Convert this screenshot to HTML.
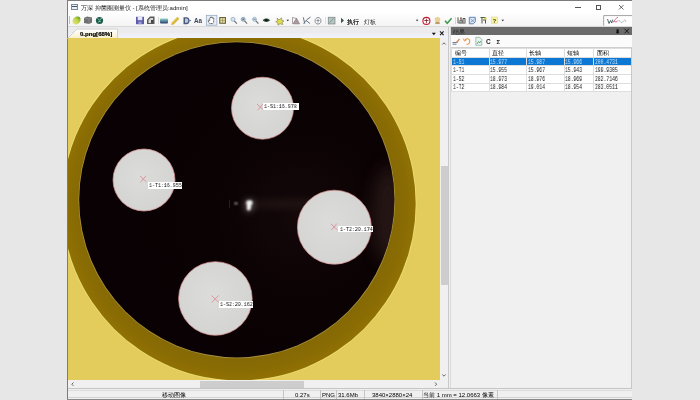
<!DOCTYPE html>
<html><head><meta charset="utf-8">
<style>
*{margin:0;padding:0;box-sizing:border-box}
html,body{width:700px;height:400px;overflow:hidden;background:#e7e7e7;font-family:"Liberation Sans",sans-serif;font-size:7px;color:#222;position:relative}
.a{position:absolute;will-change:transform}
.lbl{position:absolute;background:#fff;height:6.5px;overflow:hidden}
.lbl span{position:absolute;will-change:transform;left:1.3px;top:0.9px;color:#111;font-family:"Liberation Mono",monospace;font-size:6.2px;line-height:6.5px;white-space:nowrap;transform:scaleX(0.8);transform-origin:0 0}
.th{position:absolute;will-change:transform;font-size:5.5px;line-height:6px;color:#000;white-space:nowrap}
.td{position:absolute;will-change:transform;font-family:"Liberation Mono",monospace;font-size:6.3px;line-height:6px;color:#111;white-space:nowrap;transform:scaleX(0.75);transform-origin:0 0}
.td.sel{color:#c8e2f8}
.st{position:absolute;top:391px;line-height:8px;font-size:6px;color:#000;will-change:transform;white-space:nowrap}
.sep{position:absolute;top:389.5px;width:1px;height:9px;background:#c4c4c4}
</style></head><body>
<div class="a" style="left:67px;top:0px;width:565px;height:400px;background:#f0f0f0;border:1px solid #7c7c7c;border-right:none"></div>
<div class="a" style="left:68px;top:1px;width:564px;height:12px;background:#fff;"></div>
<div class="a" style="left:71px;top:4px;width:7px;height:6px;background:#e8eef5;border:1px solid #7a8aa0"></div>
<div class="a" style="left:72px;top:6px;width:5px;height:1px;background:#44546a;"></div>
<div class="a" style="left:81px;top:2.5px;font-size:6.1px;line-height:10px;color:#1a1a1a;white-space:nowrap">万深 抑菌圈测量仪 - [系统管理员:admin]</div>
<div class="a" style="left:575px;top:7px;width:5.5px;height:0.8px;background:#555;"></div>
<div class="a" style="left:596.3px;top:5px;width:5.4px;height:4.8px;background:transparent;border:0.8px solid #555"></div>
<svg class="a" style="left:618px;top:4px" width="7" height="7"><path d="M1 1L5.5 5.5M5.5 1L1 5.5" stroke="#444" stroke-width="0.8"/></svg>
<div class="a" style="left:68px;top:13px;width:564px;height:14px;background:linear-gradient(#fefefe,#f3f3f3);"></div>
<div class="a" style="left:68px;top:26px;width:564px;height:1px;background:#d9d9d9;"></div>
<svg class="a" style="left:0;top:0" width="700" height="30">
<defs>
<linearGradient id="g1" x1="0" y1="1" x2="1" y2="0"><stop offset="0" stop-color="#f0e890"/><stop offset="0.6" stop-color="#b8d040"/><stop offset="1" stop-color="#3c8a20"/></linearGradient>
<linearGradient id="g6" x1="0" y1="0" x2="0" y2="1"><stop offset="0" stop-color="#8fd0c8"/><stop offset="1" stop-color="#2a3f70"/></linearGradient>
</defs>
<rect x="69" y="16" width="0.8" height="8" fill="#b0b0b0"/>
<path d="M72.5 21.5c0-3 2.5-5 5-5s3 1.5 3 3.5-2 4.5-4.5 4.5-3.5-1-3.5-3z" fill="url(#g1)"/>
<path d="M84 18l3-1.5 5 1v5l-3 1.5-5-1z" fill="#707070"/><path d="M84 18l5 1v5M89 19l3-1.5" stroke="#9a9a9a" stroke-width="0.6" fill="none"/>
<circle cx="99.5" cy="20.5" r="3.6" fill="#1d5c4c"/><path d="M97.5 18.5l2 1.5 2.5-2M98 22l3-1" stroke="#9fd8c8" stroke-width="0.8" fill="none"/>
<rect x="136" y="16.8" width="8" height="7.4" fill="#5c5ca8"/><rect x="137.7" y="16.8" width="4.6" height="3.4" fill="#e8e8f8"/><rect x="138.4" y="21.6" width="3.2" height="2.6" fill="#9a9ad8"/>
<path d="M147 24v-4.5l3-3h4.5v7.5z" fill="#5a5a5a"/><path d="M148.5 23v-3l2-2h2.5v5z" fill="#d8d8d8"/><rect x="151" y="20" width="2" height="3" fill="#444"/>
<rect x="158" y="17" width="0.8" height="7" fill="#d0d0d0"/>
<rect x="160" y="18.6" width="8" height="4.8" rx="0.8" fill="url(#g6)"/>
<path d="M171.8 22.5l5.5-5.8 2 2-5.5 5.8-2.6 0.6z" fill="#d8b838"/><path d="M172.3 22.2l5.2-5.3" stroke="#f6e8a0" stroke-width="0.7"/>
<path d="M183.5 17.2h3c2 0 3 1.5 3 3.5s-1 3.5-3 3.5h-3z" fill="#4a5a78"/><path d="M185 18.6h1.5c1.1 0 1.7 0.9 1.7 2.1s-0.6 2.1-1.7 2.1H185z" fill="#b8c8e0"/><path d="M189.5 20.5l1.5 0" stroke="#4a5a78" stroke-width="0.8"/>
<text x="194" y="23.4" font-family="Liberation Sans" font-size="6.3" fill="#3c4660" font-weight="bold">Aa</text>
<rect x="206.3" y="15.3" width="10.6" height="9.9" fill="#e6eef8" stroke="#8ca4bc" stroke-width="0.7"/>
<path d="M209.8 23.6c-0.8-1-1.6-2-1.6-3 0-0.6 0.6-0.8 1-0.3l0.5 0.6v-2.8c0-0.7 1-0.7 1 0v-0.8c0-0.7 1-0.7 1 0v0.5c0-0.7 1-0.7 1 0v0.6c0-0.6 1-0.6 1 0v2.9c0 1-0.5 1.8-1 2.3z" fill="#fff" stroke="#2a2a2a" stroke-width="0.75" stroke-dasharray="1.2 0.5"/>
<rect x="219.2" y="17" width="6.8" height="6.8" fill="#6a6440"/><rect x="220.3" y="18.1" width="4.6" height="4.6" fill="#e8e0a0"/><path d="M222.6 18v4.7M220.2 20.4h4.7" stroke="#8a8450" stroke-width="0.6"/>
<circle cx="233" cy="19.3" r="2" fill="#cfe4f4" stroke="#7a9ab0" stroke-width="0.6"/><path d="M234.3 20.8l2.6 2.8" stroke="#6a6a6a" stroke-width="1.1"/>
<circle cx="243.2" cy="19.3" r="2" fill="#cfe4f4" stroke="#5a7a90" stroke-width="0.6"/><path d="M244.5 20.8l2.6 2.8" stroke="#6a6a6a" stroke-width="1.1"/><path d="M242 19.3h2.4M243.2 18.1v2.4" stroke="#3a4a60" stroke-width="0.6"/>
<circle cx="254.5" cy="19.3" r="2" fill="#cfe4f4" stroke="#7a9ab0" stroke-width="0.6"/><path d="M255.8 20.8l2.6 2.8" stroke="#6a6a6a" stroke-width="1.1"/><path d="M253.3 19.3h2.4" stroke="#3a4a60" stroke-width="0.6"/>
<path d="M262.8 20.2c1.5-2.2 5.5-2.2 7.2 0-1.7 2.2-5.7 2.2-7.2 0z" fill="#2c4a3a"/><circle cx="266.4" cy="20.2" r="1.2" fill="#0a1a10"/>
<path d="M277 18l2 2 2.5-2.2 0.5 2.7 2 0.5-2 1.5 0.8 2-2.8-0.8-2 1.5-0.3-2.5-2-1 2.2-1.2z" fill="#dede50" stroke="#6a6440" stroke-width="0.5"/>
<path d="M286.5 19.8h2.6l-1.3 1.4z" fill="#222"/>
<path d="M292.5 23.8v-6.5M292.5 17.5l4 1M293 23.8l3.5-5.5 3 5.5z" fill="#a89aa0" stroke="#7a6a70" stroke-width="0.6"/>
<path d="M303.3 17.3l1.5 6.5M303.5 23.5l3.5-4 3.5-2.5M306 20.5l4 3" stroke="#5a6a78" stroke-width="0.9" fill="none"/>
<path d="M315 21c0-2 1.5-3.5 3-3.5 1.8 0 3 1.5 3 3.5s-1.5 3-3 3-3-1-3-3z" fill="none" stroke="#8a8e98" stroke-width="1"/><path d="M316.5 20.5h3M318 19v3.5" stroke="#6a7080" stroke-width="0.7"/>
<rect x="325.2" y="17" width="0.8" height="7" fill="#d4dae4"/>
<rect x="328.2" y="17.2" width="6.8" height="6.8" fill="#b8c4c0" stroke="#6a7a78" stroke-width="0.6"/><path d="M329.5 22.5l4-4" stroke="#5a8a70" stroke-width="0.7"/>
<path d="M341 17.8l3 2.7-3 2.7z" fill="#3a5a48"/>
<text x="346.5" y="23.6" font-family="Liberation Sans" font-size="6.2" font-weight="bold" fill="#1a1a1a">执行</text>
<text x="363.5" y="23.6" font-family="Liberation Sans" font-size="6.2" fill="#2a2a2a">灯板</text>
<path d="M415.8 19.8h2.6l-1.3 1.4z" fill="#222"/>
<circle cx="426.4" cy="20.9" r="3.5" fill="#fff" stroke="#c41c34" stroke-width="1.1"/><path d="M426.4 18.6v4.6M424.3 20.5h4.2" stroke="#7a1020" stroke-width="0.8"/>
<circle cx="437.5" cy="19.8" r="2.8" fill="#e8d098"/><path d="M435.7 22l-0.7 2.3 1.5-0.6 1 0.6 1-0.6 1.5 0.6-0.7-2.3" fill="#b89858"/>
<path d="M445 20.8l2.2 2.5 4.4-5" stroke="#3c9a50" stroke-width="1.5" fill="none"/>
<rect x="455.2" y="17" width="0.8" height="7" fill="#c8ccd4"/>
<path d="M458 23.2v-5.8M458.5 23h7M460 22.5v-2.5h2v2.5M463 22.5v-4h2v4" stroke="#3a3a3a" stroke-width="0.9" fill="none"/><rect x="460" y="17.4" width="2" height="2" fill="#a08060"/>
<path d="M469.3 17.3h6v4.5l-2 2h-4z" fill="#dbe9f8" stroke="#3a70b0" stroke-width="0.8"/><path d="M470.5 19l4 3.5M474.5 19l-4 3.5" stroke="#5a6a80" stroke-width="0.6"/>
<path d="M480.5 17.5h5M482 17.5v6M485.5 17.5v6M483 20h3" stroke="#4a5a40" stroke-width="1" fill="none"/><circle cx="485.5" cy="18.5" r="1.2" fill="#d8d040"/>
<rect x="491.4" y="17" width="6.2" height="6.5" fill="#f8f4a0" stroke="#d8d090" stroke-width="0.5"/><text x="492.8" y="22.5" font-family="Liberation Sans" font-size="5.5" font-weight="bold" fill="#3a3a20">?</text>
<path d="M501.5 19.8h2.6l-1.3 1.4z" fill="#222"/>
<rect x="603.3" y="15.2" width="28.7" height="10.5" fill="#fff"/><path d="M603.7 25.7V15.6H632" stroke="#8a8a8a" stroke-width="0.8" fill="none"/>
<path d="M607.5 19c0.5 1.5 1 3 1.5 4.5l1.5-3 1.2 2.5 1-3.5" stroke="#2a4a48" stroke-width="0.8" fill="none"/>
<path d="M613 22.5c1-2 3-4 5-5.5M614 21c1.5 1.5 3 1 4-0.5" stroke="#c03070" stroke-width="0.7" fill="none"/>
<path d="M619 20c1 2 2 2.5 3 2.5s1.5-2 2.5-2.5 1 1.5 1.5 2" stroke="#8a9a98" stroke-width="0.6" fill="none"/>
</svg>
<div class="a" style="left:68px;top:27px;width:380px;height:11px;background:linear-gradient(#ececee 0%,#ececee 55%,#eeeef6 60%,#f2f2fa 100%);"></div>
<svg class="a" style="left:67px;top:28px" width="52" height="11"><defs><linearGradient id="tg" x1="0" y1="0" x2="0" y2="1"><stop offset="0" stop-color="#ffffff"/><stop offset="1" stop-color="#f8f0cc"/></linearGradient></defs><path d="M0.5 10.5L10 1H50.5V10.5Z" fill="url(#tg)" stroke="#c9c9c9" stroke-width="0.8"/></svg>
<div class="a" style="left:80px;top:29.8px;font-size:6.05px;line-height:8px;font-weight:bold;color:#000;-webkit-text-stroke:0.2px #000;white-space:nowrap">0.png[68%]</div>
<svg class="a" style="left:430px;top:30px" width="16" height="7"><path d="M1.8 2.8h4l-2 2.4z" fill="#111"/><path d="M10 1.3l3.6 3.8M13.6 1.3l-3.6 3.8" stroke="#222" stroke-width="1.1"/></svg>
<div class="a" style="left:68px;top:38px;width:372px;height:342px;background:#e3cc5b;overflow:hidden">
  <svg width="372" height="342" viewBox="68 38 372 342" style="position:absolute;left:0;top:0">
    <defs>
      <radialGradient id="dk" gradientUnits="userSpaceOnUse" cx="300" cy="215" r="170">
        <stop offset="0" stop-color="#140809"/>
        <stop offset="0.5" stop-color="#0b0204"/>
        <stop offset="1" stop-color="#090103"/>
      </radialGradient>
      <radialGradient id="lc" cx="0.45" cy="0.45" r="0.6">
        <stop offset="0" stop-color="#dcdcda"/>
        <stop offset="1" stop-color="#d3d3d1"/>
      </radialGradient>
      <radialGradient id="rg" gradientUnits="userSpaceOnUse" cx="239" cy="203.7" r="176.7"><stop offset="0.88" stop-color="#856904"/><stop offset="0.95" stop-color="#8a6c04"/><stop offset="1" stop-color="#8f7104"/></radialGradient>
      <filter id="bl" x="-50%" y="-50%" width="200%" height="200%"><feGaussianBlur stdDeviation="1"/></filter>
      <filter id="bl3" x="-50%" y="-50%" width="200%" height="200%"><feGaussianBlur stdDeviation="3"/></filter>
      <filter id="bl6" x="-100%" y="-100%" width="300%" height="300%"><feGaussianBlur stdDeviation="8"/></filter>
    </defs>
    <circle cx="239" cy="203.7" r="177.6" fill="#eedb72"/>
    <circle cx="239" cy="203.7" r="176.7" fill="url(#rg)"/>
    <circle cx="236.8" cy="199.8" r="158.4" fill="#a89040"/>
    <circle cx="236.8" cy="199.8" r="157.6" fill="url(#dk)"/>
    <clipPath id="ic"><circle cx="236.8" cy="199.8" r="157.6"/></clipPath>
    <g clip-path="url(#ic)"><ellipse cx="388" cy="215" rx="16" ry="50" fill="#3a2624" opacity="0.55" filter="url(#bl6)"/></g>
    <rect x="250" y="199" width="70" height="10" fill="#4a3a36" opacity="0.22" filter="url(#bl3)"/>
    <ellipse cx="249" cy="205.5" rx="5" ry="7" fill="#ffffff" opacity="0.25" filter="url(#bl3)"/>
    <path d="M246.5 201c1.5-1.2 5-1.2 6 0.3 0.3 2-0.5 3.5-1.5 4.5 0.3 1.5 0 3-1.2 4.5-1.5 0.5-3 0-3-1.5 0.5-1.8 0.2-3-0.3-4.5-0.3-1.2-0.3-2.5 0-3.3z" fill="#f4f4f4" filter="url(#bl)"/>
    <ellipse cx="236" cy="203.4" rx="1.5" ry="0.9" fill="#d0d0d0" filter="url(#bl)"/>
    <rect x="229.2" y="200" width="0.6" height="8" fill="#606060" opacity="0.5"/>
    <circle cx="262.5" cy="108.2" r="31" fill="url(#lc)" stroke="#e09090" stroke-width="0.7"/>
    <circle cx="144" cy="180" r="31" fill="url(#lc)" stroke="#e09090" stroke-width="0.7"/>
    <circle cx="334.4" cy="227.2" r="37" fill="url(#lc)" stroke="#e09090" stroke-width="0.7"/>
    <circle cx="215.4" cy="298.5" r="36.8" fill="url(#lc)" stroke="#e09090" stroke-width="0.7"/>
  </svg>
</div>
<svg class="a" style="left:0;top:0" width="700" height="400">
  <g stroke="#e06070" stroke-width="0.65" fill="none" opacity="0.85">
    <path d="M257 104l6.5 6M263 103.8l-5.5 6.5"/>
    <path d="M140 176l6.5 6M146 175.8l-5.5 6.5"/>
    <path d="M330.8 223.8l6.5 6M336.8 223.6l-5.5 6.5"/>
    <path d="M211.4 295.5l7.5 6.8M218.5 295.5l-6.8 7"/>
  </g>
</svg>
<div class="lbl" style="left:263px;top:103.3px;width:35.6px"><span>1-S1:16.978</span></div>
<div class="lbl" style="left:148px;top:182px;width:34.4px"><span>1-T1:16.955</span></div>
<div class="lbl" style="left:338.4px;top:225.8px;width:34.8px"><span>1-T2:20.174</span></div>
<div class="lbl" style="left:218.8px;top:301.3px;width:34.7px"><span>1-S2:20.162</span></div>
<div class="a" style="left:440px;top:38px;width:8px;height:350px;background:#f0f0f0;"></div>
<div class="a" style="left:441px;top:166px;width:7px;height:119px;background:#cdcdcd;"></div>
<div class="a" style="left:68px;top:380px;width:372px;height:8px;background:#f0f0f0;"></div>
<div class="a" style="left:200px;top:381px;width:104px;height:7px;background:#cdcdcd;"></div>
<div class="a" style="left:448px;top:27px;width:1px;height:361px;background:#c8c8c8;"></div>
<div class="a" style="left:450px;top:27px;width:1px;height:361px;background:#dadada;"></div>
<svg class="a" style="left:0;top:0" width="700" height="400"><g fill="none" stroke="#555" stroke-width="0.9"><path d="M442.3 44.5l1.7-1.7 1.7 1.7"/><path d="M442.3 374.5l1.7 1.7 1.7-1.7"/><path d="M73.5 382.5l-1.7 1.7 1.7 1.7"/><path d="M435 382.5l1.7 1.7-1.7 1.7"/></g></svg>
<div class="a" style="left:451px;top:27px;width:181px;height:8px;background:#6b6b6b;"></div>
<div class="a" style="left:451px;top:35px;width:181px;height:12px;background:#fbfbfb;"></div>
<svg class="a" style="left:0;top:0" width="700" height="50">
<text x="453" y="33.8" font-family="Liberation Sans" font-size="5.8" fill="#2a2a2a">结果</text>
<rect x="616.6" y="29.2" width="2" height="4.2" fill="#111"/><rect x="616" y="31.8" width="3.2" height="0.7" fill="#111"/>
<path d="M624.5 28.8l4.5 4.5M629 28.8l-4.5 4.5" stroke="#1a1a1a" stroke-width="1"/>
<path d="M452.5 42.5h5M452.5 44.2h4" stroke="#4a5a80" stroke-width="0.8"/><path d="M456 42l3-3.5 1 1-3 3.5z" fill="#e08a50"/>
<path d="M464.5 40.5c1-2 4-2.5 5-0.5s-0.5 4.5-3 4.5" stroke="#e8904a" stroke-width="1.1" fill="none"/><path d="M463.2 38.5l1.3 2.6 2.2-1.3" stroke="#e8904a" stroke-width="0.8" fill="none"/>
<path d="M475.8 37.3h4l2 2v6h-6z" fill="#e8f2ec" stroke="#6a9a88" stroke-width="0.6"/><path d="M477 44l1.5-2.5 1.2 1.5 1-2" stroke="#3a8a60" stroke-width="0.7" fill="none"/>
<text x="486" y="44.3" font-family="Liberation Sans" font-size="6.5" font-weight="bold" fill="#222">C</text>
<text x="496.5" y="44.3" font-family="Liberation Sans" font-size="6" font-weight="bold" fill="#222">Σ</text>
</svg>
<div class="a" style="left:451px;top:48px;width:180px;height:43px;background:#fff;"></div>
<div class="a" style="left:451px;top:47px;width:181px;height:1px;background:#cfcfcf;"></div>
<div class="a" style="left:451px;top:57px;width:180px;height:8px;background:#0c78d4;"></div>
<div class="a" style="left:451px;top:48px;width:180px;height:1px;background:#dedede;"></div>
<div class="a" style="left:451px;top:57px;width:180px;height:1px;background:#dedede;"></div>
<div class="a" style="left:451px;top:65px;width:180px;height:1px;background:#dedede;"></div>
<div class="a" style="left:451px;top:74px;width:180px;height:1px;background:#dedede;"></div>
<div class="a" style="left:451px;top:82.5px;width:180px;height:1px;background:#dedede;"></div>
<div class="a" style="left:451px;top:91px;width:180px;height:1px;background:#dedede;"></div>
<div class="a" style="left:451px;top:48px;width:1px;height:43px;background:#dedede;"></div>
<div class="a" style="left:488.5px;top:48px;width:1px;height:43px;background:#dedede;"></div>
<div class="a" style="left:526px;top:48px;width:1px;height:43px;background:#dedede;"></div>
<div class="a" style="left:563.5px;top:48px;width:1px;height:43px;background:#dedede;"></div>
<div class="a" style="left:593px;top:48px;width:1px;height:43px;background:#dedede;"></div>
<div class="a" style="left:631px;top:48px;width:1px;height:43px;background:#dedede;"></div>
<div class="th" style="left:455px;top:49.5px">编号</div>
<div class="th" style="left:492.0px;top:49.5px">直径</div>
<div class="th" style="left:529px;top:49.5px">长轴</div>
<div class="th" style="left:567.0px;top:49.5px">短轴</div>
<div class="th" style="left:596.5px;top:49.5px">面积</div>
<div class="td sel" style="left:452.5px;top:59.8px">1-S1</div>
<div class="td sel" style="left:490.0px;top:59.8px">15.977</div>
<div class="td sel" style="left:527.5px;top:59.8px">15.987</div>
<div class="td sel" style="left:565.0px;top:59.8px">15.966</div>
<div class="td sel" style="left:594.5px;top:59.8px">200.4731</div>
<div class="td" style="left:452.5px;top:67.8px">1-T1</div>
<div class="td" style="left:490.0px;top:67.8px">15.955</div>
<div class="td" style="left:527.5px;top:67.8px">15.967</div>
<div class="td" style="left:565.0px;top:67.8px">15.943</div>
<div class="td" style="left:594.5px;top:67.8px">199.9305</div>
<div class="td" style="left:452.5px;top:76.8px">1-S2</div>
<div class="td" style="left:490.0px;top:76.8px">18.973</div>
<div class="td" style="left:527.5px;top:76.8px">18.976</div>
<div class="td" style="left:565.0px;top:76.8px">18.969</div>
<div class="td" style="left:594.5px;top:76.8px">282.7146</div>
<div class="td" style="left:452.5px;top:85.3px">1-T2</div>
<div class="td" style="left:490.0px;top:85.3px">18.984</div>
<div class="td" style="left:527.5px;top:85.3px">19.014</div>
<div class="td" style="left:565.0px;top:85.3px">18.954</div>
<div class="td" style="left:594.5px;top:85.3px">283.0511</div>
<div class="a" style="left:68px;top:388px;width:564px;height:11px;background:#f0f0f0;"></div>
<div class="a" style="left:68px;top:388px;width:564px;height:1px;background:#c4c4c4;"></div>
<div class="a" style="left:68px;top:390px;width:564px;height:1px;background:#dcdcdc;"></div>
<div class="a" style="left:68px;top:397px;width:564px;height:1px;background:#d4d4d4;"></div>
<div class="a" style="left:631px;top:47px;width:1px;height:341px;background:#c8c8c8;"></div>
<div class="a" style="left:283px;top:389.5px;width:1px;height:9px;background:#c4c4c4;"></div>
<div class="a" style="left:320px;top:389.5px;width:1px;height:9px;background:#c4c4c4;"></div>
<div class="a" style="left:335.5px;top:389.5px;width:1px;height:9px;background:#c4c4c4;"></div>
<div class="a" style="left:363.5px;top:389.5px;width:1px;height:9px;background:#c4c4c4;"></div>
<div class="a" style="left:421.5px;top:389.5px;width:1px;height:9px;background:#c4c4c4;"></div>
<div class="a" style="left:497px;top:389.5px;width:1px;height:9px;background:#c4c4c4;"></div>
<div class="st" style="left:162px">移动图像</div>
<div class="st" style="left:295px">0.27s</div>
<div class="st" style="left:322px">PNG</div>
<div class="st" style="left:338px">31.6Mb</div>
<div class="st" style="left:372px">3840×2880×24</div>
<div class="st" style="left:423px">当前 1 mm = 12.0663 像素</div>
<div class="a" style="left:67px;top:399px;width:565px;height:1px;background:#8a8a8a;"></div>
</body></html>
